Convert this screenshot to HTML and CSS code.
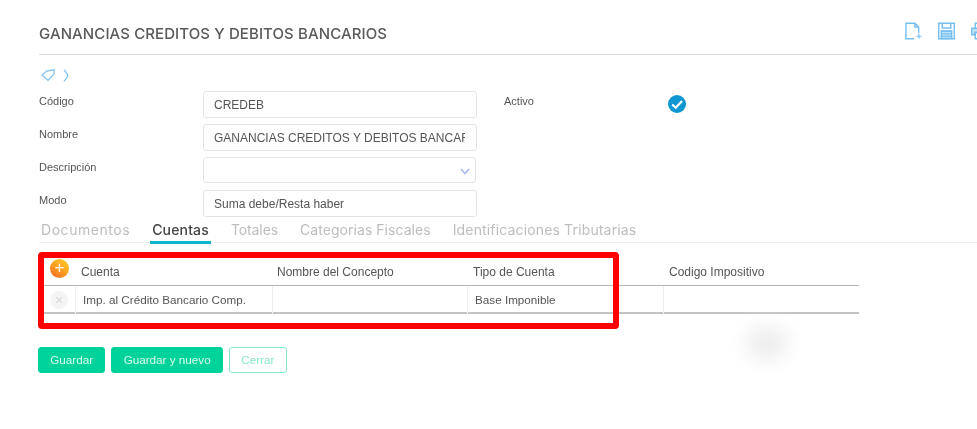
FILE: index.html
```html
<!DOCTYPE html>
<html lang="es">
<head>
    <title>Ganancias creditos y debitos bancarios</title>
    <meta charset="UTF-8">
    <link rel="stylesheet" href="styles.css">
</head>
<body>
    <div id="page">
        <div class="header">
            <h1 class="title">GANANCIAS CREDITOS Y DEBITOS BANCARIOS</h1>
            <div class="tools">
                <svg class="tool" viewBox="0 0 18 18"><path d="M9.500 17.200H1V.8H10.500L14.500 4.800V11M10.500 .8V4.800H14.500" /><path class="plus" d="M12 14.500H17.500M14.800 11.800V17.200" /></svg>
                <svg class="tool" viewBox="0 0 18 18"><path class="soft" d="M3.500 9H14.500V17H3.500Z" /><path d="M.8 .8H17.200V17.200H.8Z" /><path d="M4.500 .8V5.800H13.500V.8" /><path class="plus" d="M3.500 9.200H14.500M3.500 12H14.500M3.500 14.500H14.500" /></svg>
                <svg class="tool" viewBox="0 0 18 18"><path d="M4.500 6V.8H13.500V6" /><path class="soft" d="M.8 6H17.200V13H13.500V10.500H4.500V13H.8Z" /><path d="M4.500 10.500H13.500V17.200H4.500Z" /></svg>
            </div>
        </div>

        <div class="crumbs">
            <svg class="crumb-tag" viewBox="0 0 14 12"><path d="M1 6L6 2L13 .8V5L7 11.300Z" /></svg>
            <svg class="crumb-arrow" viewBox="0 0 6 13"><path d="M1 .8Q5 5.500 4.800 6.500Q5 7.500 1 12.200" /></svg>
        </div>

        <div class="form">
            <label class="lbl">Código</label>
            <input class="inp" value="CREDEB">
            <label class="lbl lbl-active">Activo</label>
            <svg class="check" viewBox="0 0 18 18"><circle cx="9" cy="9" r="9" /><path d="M4.200 9.500L7.700 12.800L14 5.900" /></svg>

            <label class="lbl">Nombre</label>
            <input class="inp" value="GANANCIAS CREDITOS Y DEBITOS BANCARIOS">
            <span class="spacer"></span>

            <label class="lbl">Descripción</label>
            <div class="inp inp-select">
                <svg class="chev" viewBox="0 0 10 7"><path d="M1 1L5 5.500L9 1" /></svg>
            </div>
            <span class="spacer"></span>

            <label class="lbl">Modo</label>
            <input class="inp" value="Suma debe/Resta haber">
            <span class="spacer"></span>
        </div>

        <div class="tabs">
            <span class="tab tab-docs">Documentos</span>
            <span class="tab tab-on">Cuentas</span>
            <span class="tab tab-tot">Totales</span>
            <span class="tab tab-cats">Categorias Fiscales</span>
            <span class="tab">Identificaciones Tributarias</span>
        </div>

        <div class="grid">
            <div class="row row-head">
                <div class="cell cell-btn"><span class="add">+</span></div>
                <div class="cell cell-first">Cuenta</div>
                <div class="cell">Nombre del Concepto</div>
                <div class="cell">Tipo de Cuenta</div>
                <div class="cell">Codigo Impositivo</div>
            </div>
            <div class="row row-body">
                <div class="cell cell-btn"><span class="del">×</span></div>
                <div class="cell">Imp. al Crédito Bancario Comp.</div>
                <div class="cell"></div>
                <div class="cell">Base Imponible</div>
                <div class="cell"></div>
            </div>
        </div>

        <div class="buttons">
            <button class="btn">Guardar</button>
            <button class="btn">Guardar y nuevo</button>
            <button class="btn btn-line">Cerrar</button>
        </div>

        <!-- annotation and smudge from the capture -->
        <div class="redbox"></div>
        <div class="smudge"></div>
    </div>
</body>
</html>
```

FILE: styles.css
```css
html, body {
    margin: 0;
    height: 100%;
    background: #fff;
    overflow: hidden;
}
#page {
    position: relative;
    height: 429px;
    padding-left: 39px;
    font-family: "Liberation Sans", Arial, sans-serif;
    font-size: 11px;
    color: #555;
    filter: blur(0.35px);
}
.header {
    display: flex;
    justify-content: space-between;
    align-items: center;
    height: 54px;
    border-bottom: 1px solid #dedede;
    margin-right: -11px;
}
.title {
    margin: 0;
    padding-top: 13px;
    font-family: Inter, "Liberation Sans", sans-serif;
    font-size: 15px;
    font-weight: 500;
    color: #5a5a5a;
    letter-spacing: 0.1px;
}
.tools {
    display: flex;
    gap: 16px;
    padding-top: 8px;
}
.tool {
    width: 17px;
    height: 18px;
    fill: none;
    stroke: #74bff0;
    stroke-width: 1.5;
}
.tool .soft {
    fill: #bfe2f8;
    stroke: #74bff0;
}
.tool .plus {
    stroke-width: 1.2;
}
.crumbs {
    display: flex;
    align-items: center;
    gap: 8px;
    height: 14px;
    margin: 13px 0 9px 2px;
}
.crumb-tag {
    width: 14px;
    height: 12px;
    fill: none;
    stroke: #8cc8ef;
    stroke-width: 1.4;
}
.crumb-arrow {
    width: 6px;
    height: 13px;
    fill: none;
    stroke: #74bff0;
    stroke-width: 1.3;
}
.form {
    display: grid;
    grid-template-columns: 164px 274px 191px 18px;
    grid-auto-rows: 27px;
    row-gap: 6px;
}
.lbl {
    padding-top: 4px;
    font-size: 11px;
    color: #555;
}
.lbl-active {
    padding-left: 27px;
}
.spacer {
    grid-column: span 2;
}
.inp {
    box-sizing: border-box;
    width: 274px;
    height: 27px;
    padding: 1px 11px 0 10px;
    border: 1px solid #e4e4e4;
    border-radius: 3px;
    font-family: "Liberation Sans", Arial, sans-serif;
    font-size: 12px;
    color: #555;
    background: #fff;
    outline: none;
}
.inp-select {
    display: flex;
    justify-content: flex-end;
    align-items: center;
    width: 273px;
    height: 26px;
    padding: 3px 5px 0 0;
}
.chev {
    width: 10px;
    height: 7px;
    fill: none;
    stroke: #a9b9ea;
    stroke-width: 1.6;
}
.check {
    width: 18px;
    height: 18px;
    margin-top: 4px;
}
.check circle {
    fill: #0f97d2;
}
.check path {
    fill: none;
    stroke: #fff;
    stroke-width: 2.2;
}
.tabs {
    display: flex;
    gap: 22px;
    height: 26px;
    padding-left: 2px;
    border-bottom: 1px solid #ededed;
    box-sizing: border-box;
    font-family: Inter, "Liberation Sans", sans-serif;
    font-size: 14px;
    letter-spacing: 0.15px;
    line-height: 26px;
    color: #bdbdbd;
}
.tab {
    height: 26px;
}
.tab-docs {
    letter-spacing: 0.55px;
}
.tab-tot {
    letter-spacing: -0.1px;
}
.tab-cats {
    letter-spacing: 0.05px;
}
.tab-on {
    color: #444;
    font-weight: 500;
    border-bottom: 3px solid #11b3cf;
    height: 24px;
    margin: 0 -2px;
    padding: 0 2px;
}
.grid {
    width: 820px;
    margin-top: 15px;
}
.row {
    display: grid;
    grid-template-columns: 36px 197px 196px 196px 195px;
}
.row-head {
    height: 27px;
    border-bottom: 1px solid #b5b5b5;
    font-size: 12px;
    line-height: 29px;
}
.row-body {
    grid-template-columns: 36px 197px 195px 196px 196px;
    height: 26px;
    border-bottom: 2px solid #c4c4c4;
    font-size: 11.7px;
    line-height: 28px;
}
.row-head .cell {
    padding-left: 5px;
    color: #555;
}
.row-head .cell-first {
    padding-left: 6px;
}
.row-body .cell {
    padding-left: 7px;
    border-left: 1px solid #eee;
}
.row-body .cell-btn {
    border-left: 0;
    padding-left: 0;
}
.cell-btn {
    display: flex;
    align-items: center;
}
.row-head .cell-btn {
    padding-left: 11px;
    align-items: flex-start;
}
.add {
    width: 19px;
    height: 19px;
    margin-top: 1px;
    border-radius: 50%;
    background: linear-gradient(215deg, #ffd42e, #fb9a1e 55%, #f0632c);
    color: #fff;
    font-size: 17px;
    font-weight: 400;
    line-height: 18px;
    text-align: center;
}
.del {
    width: 18px;
    height: 18px;
    margin-left: 11px;
    border-radius: 50%;
    background: #f5f5f5;
    color: #d5d5d5;
    font-size: 14px;
    line-height: 18px;
    text-align: center;
}
.buttons {
    display: flex;
    gap: 6px;
    margin: 33px 0 0 -1px;
}
.btn {
    height: 26px;
    padding: 0 11.25px 2px;
    border: 1px solid #00d39a;
    border-radius: 3px;
    background: #00d39a;
    color: #d8f8ee;
    font-family: "Liberation Sans", Arial, sans-serif;
    font-size: 11.7px;
}
.btn-line {
    background: #fff;
    border-color: #86e8cc;
    color: #86e8cc;
}
.redbox {
    position: absolute;
    left: 38px;
    top: 252px;
    width: 569px;
    height: 65px;
    border: 6px solid #f00;
    border-radius: 4px;
}
.smudge {
    position: absolute;
    left: 745px;
    top: 325px;
    width: 44px;
    height: 36px;
    border-radius: 50%;
    background: #efefef;
    filter: blur(9px);
}
```
